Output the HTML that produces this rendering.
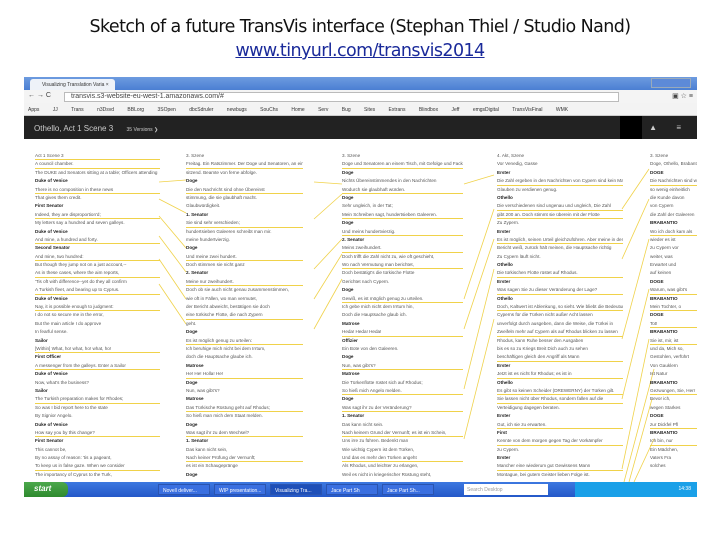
<!DOCTYPE html>
<html><head><meta charset="utf-8"><style>
*{margin:0;padding:0;box-sizing:border-box}
body{width:720px;height:540px;background:#fff;position:relative;overflow:hidden;font-family:"Liberation Sans",sans-serif}
.t{position:absolute;left:0;width:720px;text-align:center;font-size:17.5px;color:#111;font-family:"DejaVu Sans","Liberation Sans",sans-serif;letter-spacing:-0.6px}
.scr{position:absolute;left:24px;top:77px;width:673px;height:420px;background:#fff;overflow:hidden}
.tabs{position:absolute;left:0;top:0;width:673px;height:13px;background:linear-gradient(#6d9be0,#4b7fd3)}
.tab{position:absolute;left:6px;top:2px;width:85px;height:11px;background:#eef2f8;font-size:5px;padding:3px 0 0 12px;color:#333;border-radius:3px 3px 0 0}
.addr{position:absolute;top:13px;left:0;width:673px;height:13px;background:#f4f4f4;font-size:7px;color:#444}
.url{position:absolute;left:40px;top:2px;width:555px;height:10px;background:#fff;border:1px solid #bbb;font-size:7px;line-height:8px;padding-left:6px}
.bm{position:absolute;top:26px;left:0;width:673px;height:13px;background:#f3f3f3;border-bottom:1px solid #ccc;font-size:5px;color:#333;padding:4px 4px;word-spacing:12px;white-space:nowrap}
.hd{position:absolute;top:39px;left:0;width:673px;height:23px;background:#222;color:#ccc;font-size:8px;padding:8px 10px;white-space:nowrap}
.hd .r{position:absolute;right:55px;top:0;width:22px;height:23px;background:#000}
.col{position:absolute;top:75px;height:330px;font-size:4.6px;line-height:8.4px;color:#555;white-space:nowrap;overflow:hidden}
.col div{height:8.4px}
.col .y{border-bottom:1px solid #f0d24a}
.col b{font-weight:bold;color:#222}
.task{position:absolute;top:405px;left:0;width:673px;height:15px;background:linear-gradient(#3d78e0,#2458c8);font-size:5px;color:#fff}
.start{position:absolute;left:0;top:0;width:44px;height:15px;background:linear-gradient(#4ca84c,#2e8a2e);font-size:8px;font-style:italic;font-weight:bold;padding:2px 0 0 10px;border-radius:0 6px 6px 0}
.tb{position:absolute;top:2px;height:11px;width:52px;background:#3a6fe0;border:1px solid #2a54b0;padding:3px 4px;white-space:nowrap;overflow:hidden}
.tray{position:absolute;right:0;top:0;width:122px;height:15px;background:#1aa0e8;padding:4px 6px;text-align:right}
</style></head><body>
<div class="t" style="top:17px">Sketch of a future TransVis interface (Stephan Thiel / Studio Nand)</div>
<div class="t" style="top:41px"><span style="color:#1a2a9a;text-decoration:underline">www.tinyurl.com/transvis2014</span></div>
<div class="scr">
<div class="tabs"><div class="tab">Visualizing Translation Varia ×</div><div style="position:absolute;right:6px;top:1px;width:40px;height:10px;border:1px solid #9ab;background:#5d8ad8"></div></div>
<div class="addr"><span style="position:absolute;left:4px;top:2px">← → C</span><div class="url">transvis.s3-website-eu-west-1.amazonaws.com/#</div><span style="position:absolute;right:4px;top:2px">▣ ☆ ≡</span></div>
<div class="bm">Apps JJ Trans n3Dsvd BBLorg 3SOpen dbcSdruler newbugs SouChs Home Serv Bug Sites Extrans Blindbox Jeff emgsDigital TransVisFinal WMK</div>
<div class="hd">Othello, Act 1 Scene 3 &nbsp;&nbsp;&nbsp;&nbsp;&nbsp;<span style="font-size:5px">35 Versions ❯</span><div class="r"></div><span style="position:absolute;right:40px;top:7px">▲</span><span style="position:absolute;right:16px;top:7px">≡</span></div>
<svg style="position:absolute;left:0;top:62px" width="673" height="343">
<g stroke="#f0d24a" stroke-width="0.8" fill="none">
<path d="M135 43 L162 41"/><path d="M135 60 L162 74"/><path d="M135 77 L162 109"/><path d="M135 97 L162 133"/><path d="M135 120 L162 160"/><path d="M135 145 L162 185"/>
<path d="M290 43 L318 45"/><path d="M290 80 L318 55"/><path d="M290 130 L318 100"/><path d="M290 160 L318 115"/><path d="M290 190 L318 140"/>
<path d="M440 45 L470 36"/><path d="M440 160 L470 70"/><path d="M440 190 L470 100"/><path d="M440 250 L470 130"/><path d="M440 300 L470 180"/>
<path d="M598 70 L625 30"/><path d="M598 120 L625 60"/><path d="M598 200 L625 100"/><path d="M598 260 L625 150"/><path d="M598 330 L625 200"/><path d="M600 343 L630 230"/><path d="M605 343 L628 260"/><path d="M610 343 L630 300"/>
</g></svg>
<div class="col" style="left:11px;width:125px">
<div class="y">Act 1 Scene 3</div><div class="y">A council chamber.</div><div>The DUKE and Senators sitting at a table; Officers attending</div><div><b>Duke of Venice</b></div><div class="y">There is no composition in these news</div><div>That gives them credit.</div><div><b>First Senator</b></div><div class="y">Indeed, they are disproportion'd;</div><div>My letters say a hundred and seven galleys.</div><div><b>Duke of Venice</b></div><div class="y">And mine, a hundred and forty.</div><div><b>Second Senator</b></div><div class="y">And mine, two hundred:</div><div>But though they jump not on a just account,--</div><div class="y">As in these cases, where the aim reports,</div><div>'Tis oft with difference--yet do they all confirm</div><div class="y">A Turkish fleet, and bearing up to Cyprus.</div><div><b>Duke of Venice</b></div><div class="y">Nay, it is possible enough to judgment:</div><div>I do not so secure me in the error,</div><div>But the main article I do approve</div><div>In fearful sense.</div><div><b>Sailor</b></div><div class="y">[Within] What, ho! what, ho! what, ho!</div><div><b>First Officer</b></div><div class="y">A messenger from the galleys. Enter a Sailor</div><div><b>Duke of Venice</b></div><div>Now, what's the business?</div><div><b>Sailor</b></div><div class="y">The Turkish preparation makes for Rhodes;</div><div>So was I bid report here to the state</div><div>By Signior Angelo.</div><div><b>Duke of Venice</b></div><div class="y">How say you by this change?</div><div><b>First Senator</b></div><div>This cannot be,</div><div>By no assay of reason: 'tis a pageant,</div><div class="y">To keep us in false gaze. When we consider</div><div>The importancy of Cyprus to the Turk,</div>
</div>
<div class="col" style="left:162px;width:117px">
<div>3. Szene</div><div class="y">Freitag. Ein Ratszimmer. Der Doge und Senatoren, an einem Tisch</div><div>sitzend. Beamte von ferne abfolge.</div><div><b>Doge</b></div><div class="y">Die den Nachricht sind ohne Übereinst</div><div>stimmung, die sie glaubhaft macht.</div><div>Glaubwürdigkeit.</div><div><b>1. Senator</b></div><div class="y">Sie sind sehr verschieden;</div><div>hundertsieben Galeeren schreibt man mir.</div><div>meine hundertvierzig.</div><div><b>Doge</b></div><div class="y">Und meine zwei hundert.</div><div>Doch stimmen sie nicht ganz</div><div><b>2. Senator</b></div><div class="y">Meine nur zweihundert.</div><div>Doch ob sie auch nicht genau zusammenstimmen,</div><div>wie oft in Fällen, wo man vermutet,</div><div>der Bericht abweicht, bestätigen sie doch</div><div class="y">eine türkische Flotte, die nach Zypern</div><div>geht.</div><div><b>Doge</b></div><div class="y">Es ist möglich genug zu urteilen:</div><div>Ich beruhige mich nicht bei dem Irrtum,</div><div>doch die Hauptsache glaube ich.</div><div><b>Matrose</b></div><div class="y">He! He! Holla! He!</div><div><b>Doge</b></div><div>Nun, was gibt's?</div><div><b>Matrose</b></div><div class="y">Das Türkische Rüstung geht auf Rhodus;</div><div>So hieß man mich dem Staat melden.</div><div><b>Doge</b></div><div class="y">Was sagt ihr zu dem Wechsel?</div><div><b>1. Senator</b></div><div>Das kann nicht sein,</div><div class="y">Nach keiner Prüfung der Vernunft;</div><div>es ist ein Schaugepränge</div><div><b>Doge</b></div>
</div>
<div class="col" style="left:318px;width:121px">
<div>3. Szene</div><div class="y">Doge und Senatoren an einem Tisch, mit Gefolge und Fackelträgern.</div><div><b>Doge</b></div><div>Nichts Übereinstimmendes in den Nachrichten</div><div class="y">Wodurch sie glaubhaft würden.</div><div><b>Doge</b></div><div>Sehr ungleich, in der Tat;</div><div class="y">Mein Schreiben sagt, hundertsieben Galeeren.</div><div><b>Doge</b></div><div class="y">Und meins hundertvierzig.</div><div><b>2. Senator</b></div><div class="y">Meins zweihundert.</div><div>Doch trifft die Zahl nicht zu, wie oft geschieht,</div><div class="y">Wo nach Vermutung man berichtet,</div><div>Doch bestätigt's die türkische Flotte</div><div>Gerichtet nach Cypern.</div><div><b>Doge</b></div><div class="y">Gewiß, es ist möglich genug zu urteilen.</div><div>Ich gebe mich nicht dem Irrtum hin,</div><div>Doch die Hauptsache glaub ich.</div><div><b>Matrose</b></div><div class="y">Heda! Heda! Heda!</div><div><b>Offizier</b></div><div>Ein Bote von den Galeeren.</div><div><b>Doge</b></div><div class="y">Nun, was gibt's?</div><div><b>Matrose</b></div><div>Die Türkenflotte rüstet sich auf Rhodus;</div><div class="y">So hieß mich Angelo melden.</div><div><b>Doge</b></div><div class="y">Was sagt ihr zu der Veränderung?</div><div><b>1. Senator</b></div><div>Das kann nicht sein.</div><div class="y">Nach keinem Grund der Vernunft; es ist ein Schein,</div><div>Uns irre zu führen. Bedenkt man</div><div>Wie wichtig Cypern ist dem Türken,</div><div class="y">Und das es mehr den Türken angeht</div><div>Als Rhodus, und leichter zu erlangen,</div><div>Weil es nicht in kriegerischer Rüstung steht,</div>
</div>
<div class="col" style="left:473px;width:126px">
<div>4. Akt, Szene</div><div>Vor Venedig, Gasse</div><div><b>Erster</b></div><div class="y">Die Zahl ergeben in den Nachrichten von Cypern sind kein Maß</div><div>Glauben zu verdienen genug.</div><div><b>Othello</b></div><div class="y">Die verschiedenen sind ungenau und ungleich, Die Zahl</div><div class="y">gibt 200 an. Doch stimmt sie überein mit der Flotte</div><div>Zu Zypern.</div><div><b>Erster</b></div><div class="y">Es ist möglich, seinen Urteil gleichzuführen. Aber meine in den</div><div>Bericht weiß, zurück hält meinen, die Hauptsache richtig</div><div>Zu Cypern läuft nicht.</div><div><b>Othello</b></div><div class="y">Die türkischen Flotte rüstet auf Rhodus.</div><div><b>Erster</b></div><div class="y">Was sagen Sie zu dieser Veränderung der Lage?</div><div><b>Othello</b></div><div class="y">Doch, Kaltwert ist Ablenkung, so sieht. Wie bliebt die Bedeutung</div><div>Cyperns für die Türken nicht außer Acht lassen</div><div>unverfolgt durch ausgeben, dann die Weise, die Türkei in</div><div class="y">Zweifeln mehr auf Cypern als auf Rhodus blicken zu lassen</div><div>Rhodus, kann Ruhe besser den Ausgaben</div><div>bis es so zu Kriegs Breit Dich auch zu sehen</div><div class="y">beschäftigen gleich den Angriff als Mann</div><div><b>Erster</b></div><div class="y">Jetzt ist es nicht für Rhodus; es ist in</div><div><b>Othello</b></div><div class="y">Es gibt so keinen Scheider (DREWERNY) der Türken gilt.</div><div class="y">Sie lassen nicht über Rhodus, sondern fallen auf die</div><div>Verteidigung dagegen beraten.</div><div><b>Erster</b></div><div class="y">Gut, ich sie zu erwarten.</div><div><b>First</b></div><div class="y">Kennte von dem morgen gegen Tag der Vorkämpfer</div><div>zu Cypern.</div><div><b>Erster</b></div><div class="y">Mancher eine wiederum gut Gewissens Mann</div><div>Montague, bei gutem Geister lieben Folge ist.</div>
</div>
<div class="col" style="left:626px;width:47px">
<div>3. Szene</div><div>Doge, Othello, Brabantio</div><div><b>DOGE</b></div><div class="y">Die Nachrichten sind widersprüchlich</div><div>so wenig einheitlich</div><div>die Kunde davon</div><div>von Cypern</div><div>die Zahl der Galeeren</div><div><b>BRABANTIO</b></div><div class="y">Wo ich doch kam als</div><div>wieder es ist</div><div>zu Cypern vor</div><div>weiter, was</div><div>Erwartet und</div><div>auf keinen</div><div><b>DOGE</b></div><div class="y">Warum, was gibt's</div><div><b>BRABANTIO</b></div><div class="y">Mein Tochter, o</div><div><b>DOGE</b></div><div class="y">Tot!</div><div><b>BRABANTIO</b></div><div class="y">Sie ist, mir, ist</div><div>und da, Mich so,</div><div>Gestohlen, verführt</div><div>Von Gauklern</div><div>Ist Natur</div><div><b>BRABANTIO</b></div><div class="y">Gezwungen, Sie, Herr</div><div>Bevor ich,</div><div>wegen Starkes</div><div><b>DOGE</b></div><div class="y">zur Dickfel Pfl</div><div><b>BRABANTIO</b></div><div class="y">Ich bin, nur</div><div>Ein Mädchen,</div><div>Vaters Fra</div><div>solches</div>
</div>
<div class="task"><div class="start">start</div>
<div class="tb" style="left:134px">Novell deliver...</div><div class="tb" style="left:190px">WIP presentation...</div><div class="tb" style="left:246px;background:#1e4fb8">Visualizing Tra...</div><div class="tb" style="left:302px">Jace Part Sh</div><div class="tb" style="left:358px">Jace Part Sh...</div>
<div style="position:absolute;left:440px;top:2px;width:84px;height:11px;background:#fff;color:#999;padding:3px">Search Desktop</div>
<div class="tray">14:38</div></div>
</div>
</body></html>
